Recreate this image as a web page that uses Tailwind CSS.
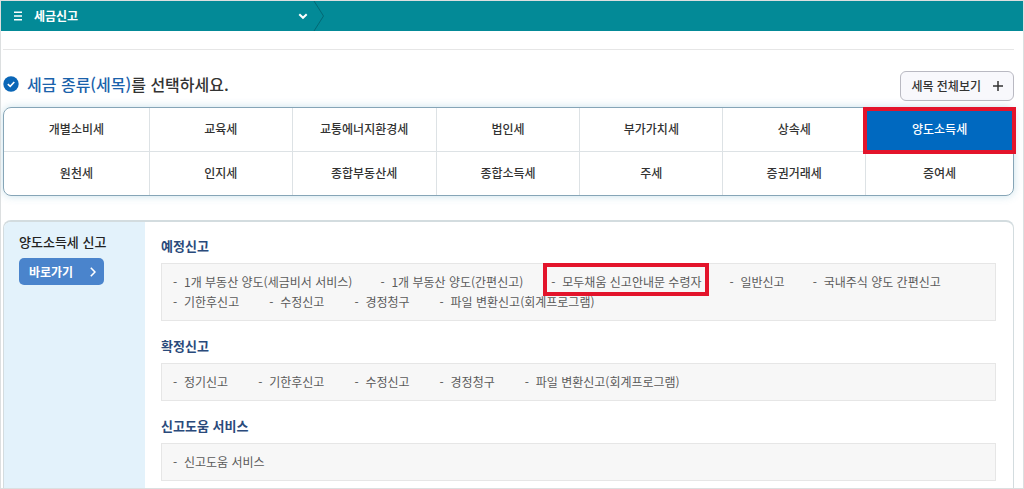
<!DOCTYPE html>
<html lang="ko">
<head>
<meta charset="utf-8">
<meta name="viewport" content="width=device-width, initial-scale=1">
<title>세금신고</title>
<script src="https://cdn.jsdelivr.net/npm/@tailwindcss/browser@4"></script>
</head>
<body class="flex h-screen flex-col overflow-hidden border border-[#dcdfe0] bg-white font-['Noto_Sans_CJK_KR',sans-serif] text-xs text-[#333]">
  <header class="flex h-[30px] shrink-0 items-stretch bg-[#038a97]">
    <button type="button" class="flex w-[307px] items-center pl-[11px] text-left font-bold text-white">
      <svg class="mr-[10px] size-3" viewBox="0 0 12 12" fill="none" stroke="currentColor" stroke-width="1.6" aria-hidden="true"><path d="M2 2.2h8M2 6h8M2 9.8h8"/></svg>
      <span class="flex-1">세금신고</span>
      <svg class="w-[10px]" viewBox="0 0 10 10" fill="none" stroke="currentColor" stroke-width="2" aria-hidden="true"><path d="M1.3 3.2 5 6.8l3.7-3.6"/></svg>
    </button>
    <svg class="ml-[5px] h-[30px] w-3" viewBox="0 0 12 30" fill="none" stroke="#046874" aria-hidden="true"><path d="M1 0 10.5 15 1 30"/></svg>
  </header>

  <main class="flex min-h-0 flex-1 flex-col pt-[18px] pr-[9px] pl-[2px]">
    <hr class="border-[#e6e6e6]">
    <div class="flex shrink-0 items-start justify-between pt-[21px] pb-[6px]">
      <h1 class="flex items-center gap-2 text-base leading-[26px] font-medium text-[#333]">
        <svg class="size-4" viewBox="0 0 16 16" aria-hidden="true"><circle cx="8" cy="8" r="7.7" fill="#0a66b7"/><path d="M4.8 8.2 7.2 10.3 11.3 6" fill="none" stroke="#fff" stroke-width="1.6"/></svg>
        <span><span class="text-[#1a62ab]">세금 종류(세목)</span>를 선택하세요.</span>
      </h1>
      <button type="button" class="flex h-[30px] items-center gap-3 rounded-md border border-[#b9b9c2] bg-[#f8f8fc] px-[10px] font-medium">세목 전체보기
        <svg class="size-[10px]" viewBox="0 0 10 10" fill="none" stroke="currentColor" stroke-width="1.5" aria-hidden="true"><path d="M5 0v10M0 5h10"/></svg>
      </button>
    </div>

    <nav aria-label="세목" class="grid shrink-0 grid-cols-[146fr_143fr_144fr_144fr_143fr_143fr_147fr] rounded-lg border border-[#86a5b7] font-medium shadow-[0_0_8px_rgba(80,160,190,0.3)] *:pb-0.5">
      <button type="button" class="h-[44px] border-r border-b border-[#dde2e5]">개별소비세</button>
      <button type="button" class="border-r border-b border-[#dde2e5]">교육세</button>
      <button type="button" class="border-r border-b border-[#dde2e5]">교통에너지환경세</button>
      <button type="button" class="border-r border-b border-[#dde2e5]">법인세</button>
      <button type="button" class="border-r border-b border-[#dde2e5]">부가가치세</button>
      <button type="button" class="border-r border-b border-[#dde2e5]">상속세</button>
      <button type="button" class="relative bg-[#0069c0] text-white">양도소득세<span class="pointer-events-none absolute -inset-x-[3px] -top-px -bottom-0.5 border-4 border-[#e3142b]"></span></button>
      <button type="button" class="h-[43px] border-r border-[#dde2e5]">원천세</button>
      <button type="button" class="border-r border-[#dde2e5]">인지세</button>
      <button type="button" class="border-r border-[#dde2e5]">종합부동산세</button>
      <button type="button" class="border-r border-[#dde2e5]">종합소득세</button>
      <button type="button" class="border-r border-[#dde2e5]">주세</button>
      <button type="button" class="border-r border-[#dde2e5]">증권거래세</button>
      <button type="button">증여세</button>
    </nav>

    <section class="mt-6 flex min-h-0 flex-1 overflow-hidden rounded-t-lg border-x border-t-2 border-[#d3dcdf]">
      <aside class="w-[141px] shrink-0 bg-[#e3f2fb] pt-[10px] pl-[15px]">
        <h2 class="text-[13px] leading-5 font-medium text-[#222]">양도소득세 신고</h2>
        <a href="#go" class="mt-[6px] flex h-[27px] w-[85px] items-center justify-between rounded-[5px] bg-[#4a84cc] pr-2 pl-[10px] font-bold text-white">바로가기
          <svg class="h-[10px] w-[6px]" viewBox="0 0 6 10" fill="none" stroke="currentColor" stroke-width="1.6" aria-hidden="true"><path d="M.8.7 5 5 .8 9.3"/></svg>
        </a>
      </aside>
      <div class="flex-1 pt-[14px] pr-[17px] pl-4 leading-5 text-[#5a5a5a]">
        <h3 class="mb-[7px] text-[13px] font-bold text-[#2a4a7b]">예정신고</h3>
        <div class="mb-[15px] border border-[#e6e6e6] bg-[#f7f7f7] px-[11px] py-2">
          <ul class="flex flex-wrap gap-x-7">
            <li class="flex"><span class="w-[11px]">-</span><a href="#a1">1개 부동산 양도(세금비서 서비스)</a></li>
            <li class="flex"><span class="w-[11px]">-</span><a href="#a2">1개 부동산 양도(간편신고)</a></li>
            <li class="relative flex"><span class="w-[11px]">-</span><a href="#a3">모두채움 신고안내문 수령자</a><span class="pointer-events-none absolute -inset-x-2 -top-[9px] -bottom-1 border-4 border-[#e3142b]"></span></li>
            <li class="flex"><span class="w-[11px]">-</span><a href="#a4">일반신고</a></li>
            <li class="flex"><span class="w-[11px]">-</span><a href="#a5">국내주식 양도 간편신고</a></li>
          </ul>
          <ul class="flex flex-wrap gap-x-[30px]">
            <li class="flex"><span class="w-[11px]">-</span><a href="#a6">기한후신고</a></li>
            <li class="flex"><span class="w-[11px]">-</span><a href="#a7">수정신고</a></li>
            <li class="flex"><span class="w-[11px]">-</span><a href="#a8">경정청구</a></li>
            <li class="flex"><span class="w-[11px]">-</span><a href="#a9">파일 변환신고(회계프로그램)</a></li>
          </ul>
        </div>
        <h3 class="mb-[7px] text-[13px] font-bold text-[#2a4a7b]">확정신고</h3>
        <ul class="mb-[15px] flex flex-wrap gap-x-[30px] border border-[#e6e6e6] bg-[#f7f7f7] px-[11px] py-2">
          <li class="flex"><span class="w-[11px]">-</span><a href="#b1">정기신고</a></li>
          <li class="flex"><span class="w-[11px]">-</span><a href="#b2">기한후신고</a></li>
          <li class="flex"><span class="w-[11px]">-</span><a href="#b3">수정신고</a></li>
          <li class="flex"><span class="w-[11px]">-</span><a href="#b4">경정청구</a></li>
          <li class="flex"><span class="w-[11px]">-</span><a href="#b5">파일 변환신고(회계프로그램)</a></li>
        </ul>
        <h3 class="mb-[7px] text-[13px] font-bold text-[#2a4a7b]">신고도움 서비스</h3>
        <ul class="flex flex-wrap gap-x-[30px] border border-[#e6e6e6] bg-[#f7f7f7] px-[11px] py-2">
          <li class="flex"><span class="w-[11px]">-</span><a href="#c1">신고도움 서비스</a></li>
        </ul>
      </div>
    </section>
  </main>
</body>
</html>
